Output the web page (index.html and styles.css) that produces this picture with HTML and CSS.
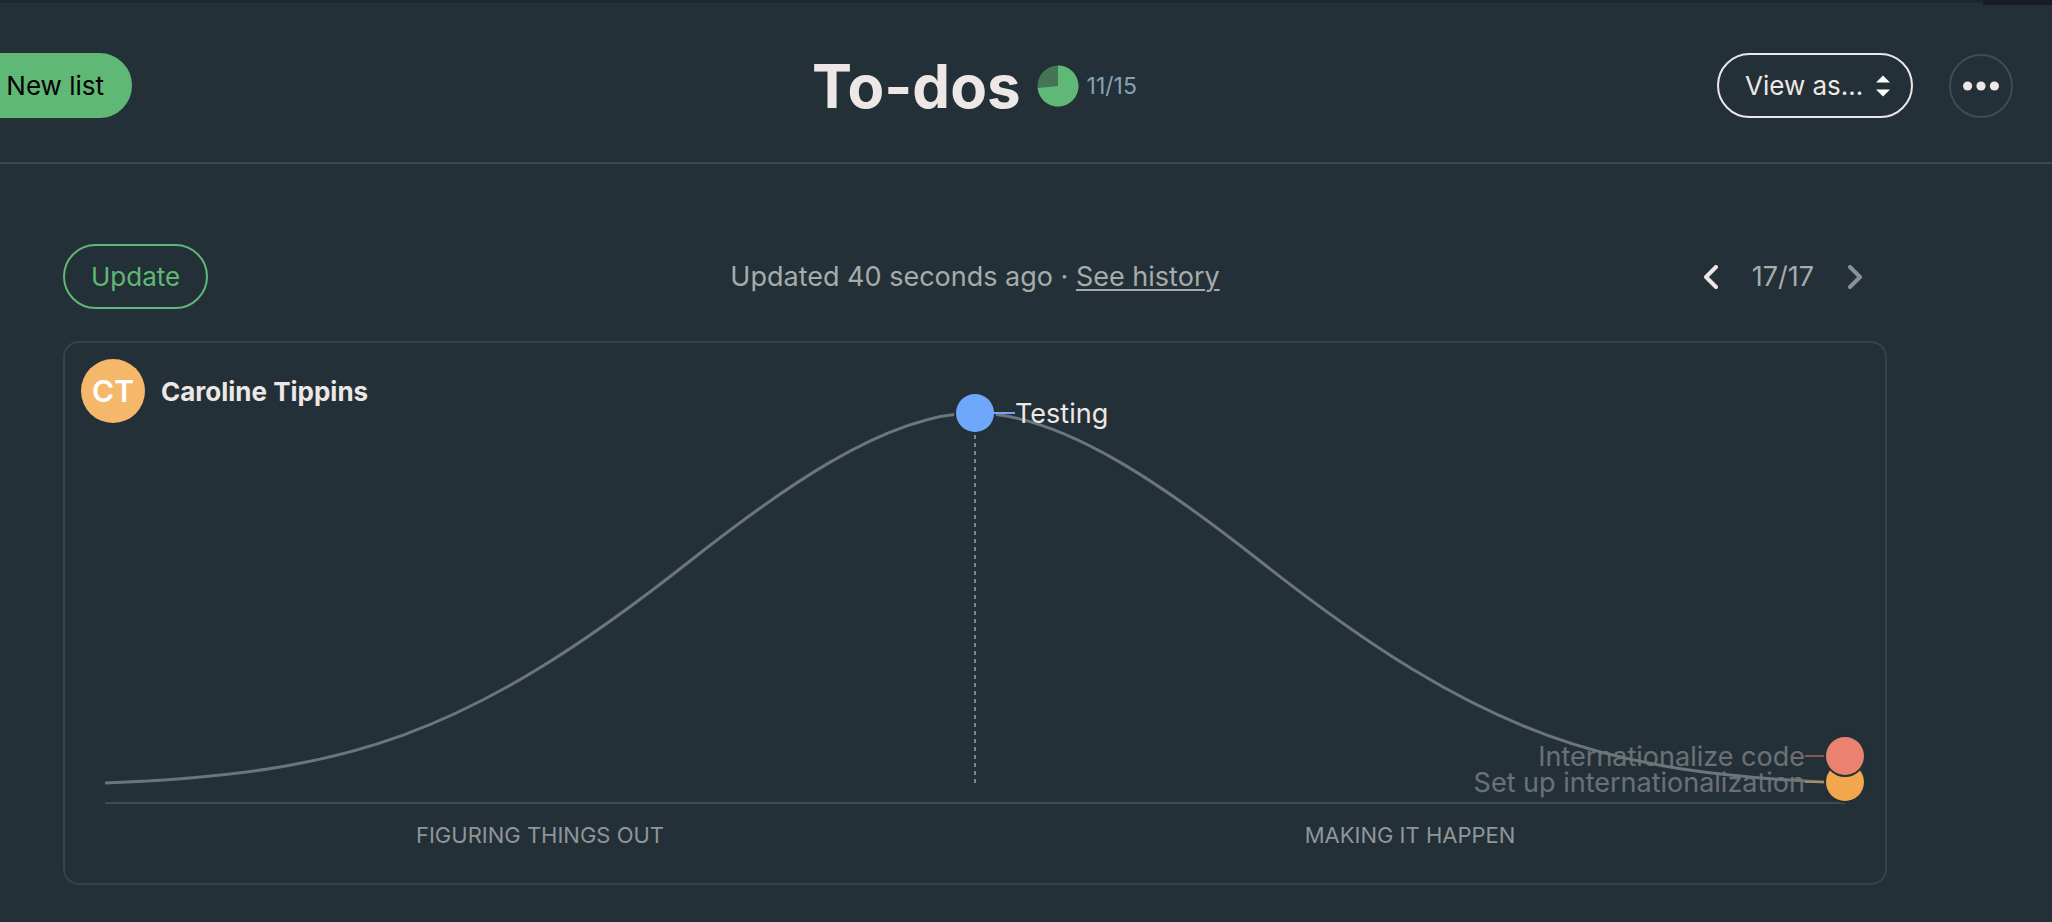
FILE: index.html
```html
<!DOCTYPE html>
<html lang="en">
<head>
<meta charset="utf-8">
<title>To-dos</title>
<link rel="stylesheet" href="styles.css">
</head>
<body>
<div class="edge"><span class="edge-tab"></span></div>
<header class="header">
  <button class="button button-primary" type="button">New list</button>
  <div class="title">
    <h1>To-dos</h1>
    <svg class="pie" viewBox="0 0 42 42" aria-hidden="true">
      <circle cx="21" cy="21" r="20.5" fill="#437556"/>
      <path d="M21 21V.5A20.5 20.5 0 1 1 .6 23.1Z" fill="#5fb876"/>
    </svg>
    <span class="count">11/15</span>
  </div>
  <div class="actions">
    <div class="view">
      <select class="button view-select" aria-label="View as">
        <option>View as...</option>
      </select>
      <svg class="view-arrows" viewBox="0 0 14 22" aria-hidden="true">
        <path d="M0 7.500L7 .5L14 7.500ZM0 14.500H14L7 21.500Z" fill="#fff"/>
      </svg>
    </div>
    <button class="more" type="button" aria-label="More options">
      <svg viewBox="0 0 36 10" aria-hidden="true"><g fill="#ede8e5"><circle cx="4.600" cy="5" r="4.600"/><circle cx="18" cy="5" r="4.600"/><circle cx="31.400" cy="5" r="4.600"/></g></svg>
    </button>
  </div>
</header>
<main class="content">
  <div class="toolbar">
    <button class="button button-outline" type="button">Update</button>
    <p class="status">Updated 40 seconds ago · <a href="#history">See history</a></p>
    <nav class="pager" aria-label="History">
      <button type="button" aria-label="Previous"><svg viewBox="0 0 14 24" aria-hidden="true"><path d="M12 2L2 12L12 22" stroke="#ede8e5"/></svg></button>
      <span class="page">17/17</span>
      <button type="button" aria-label="Next"><svg viewBox="0 0 14 24" aria-hidden="true"><path d="M2 2L12 12L2 22" stroke="#8b9295"/></svg></button>
    </nav>
  </div>
  <section class="card">
    <div class="author"><span class="avatar">CT</span><strong>Caroline Tippins</strong></div>
    <svg class="hill" viewBox="65 343 1820 540" role="img" aria-label="Hill chart">
      <line class="axis" x1="105" y1="803" x2="1845" y2="803"/>
      <line class="middle" x1="975" y1="435" x2="975" y2="783"/>
      <g class="faded">
        <text class="label" x="1805" y="792" text-anchor="end">Set up internationalization</text>
        <text class="label" x="1805" y="766" text-anchor="end">Internationalize code</text>
      </g>
      <path class="curve" d="M105 783C345 773.400 465 738.700 690 561C775 494 885 413 975 413C1065 413 1175 494 1260 561C1485 738.700 1605 773.400 1845 783"/>
      <line class="lead faded-lead" x1="1805" y1="782" x2="1827" y2="782" stroke="#f2a64e"/>
      <line class="lead faded-lead" x1="1805" y1="756" x2="1827" y2="756" stroke="#eb8270"/>
      <circle class="halo" cx="1845" cy="782" r="21"/><circle cx="1845" cy="782" r="19" fill="#f2a64e"/>
      <circle class="halo" cx="1845" cy="756" r="21"/><circle cx="1845" cy="756" r="19" fill="#eb8270"/>
      <circle class="halo" cx="975" cy="413" r="21"/><circle cx="975" cy="413" r="19" fill="#6fa8fa"/>
      <line class="lead" x1="993" y1="413" x2="1015" y2="413" stroke="#6fa8fa"/>
      <text class="label" x="1015" y="423">Testing</text>
      <text class="phase" x="540" y="843" text-anchor="middle">FIGURING THINGS OUT</text>
      <text class="phase" x="1410" y="843" text-anchor="middle">MAKING IT HAPPEN</text>
    </svg>
  </section>
</main>
</body>
</html>
```
FILE: styles.css
```css
* {
  box-sizing: border-box;
}

body {
  margin: 0;
  overflow-x: hidden;
  background: #243037;
  color: #ede8e5;
  font-family: Inter, "Liberation Sans", sans-serif;
  font-size: 26px;
}

button,
select {
  margin: 0;
  font: inherit;
  cursor: pointer;
}

.edge {
  display: flex;
  justify-content: flex-end;
  height: 3px;
  background: #1e272d;
}

.edge-tab {
  width: 69px;
  height: 5px;
  background: #171d26;
}

/* The header starts beyond the left edge of the window. */
.header {
  display: grid;
  grid-template-columns: 1fr auto 1fr;
  align-items: center;
  height: 161px;
  margin-left: -64px;
  padding: 6px 39px 0 0;
  border-bottom: 2px solid #374850;
}

.header > .button {
  justify-self: start;
}

.button {
  height: 65px;
  padding: 0 28px;
  border: 2px solid;
  border-radius: 33px;
  background: transparent;
}

.button-primary {
  width: 196px;
  padding: 0 26px;
  border-color: #5fb876;
  background: #5fb876;
  color: #000;
  text-align: right;
}

.button-outline {
  justify-self: start;
  padding: 0 26px;
  border-color: #5fb876;
  color: #5fb876;
}

.title {
  display: flex;
  align-items: center;
}

.title h1 {
  margin: 0;
  font-size: 60px;
  font-weight: 700;
  line-height: 72px;
}

.pie {
  width: 42px;
  height: 42px;
  margin-left: 16px;
}

.count {
  margin-left: 8px;
  color: #84a2b3;
  font-size: 23px;
}

.actions {
  display: flex;
  justify-content: flex-end;
  align-items: center;
  gap: 36px;
}

.view {
  position: relative;
}

.view-select {
  width: 196px;
  padding: 0 26px;
  appearance: none;
  color: #ede8e5;
}

.view-arrows {
  position: absolute;
  top: 22px;
  right: 23px;
  width: 14px;
  height: 22px;
  pointer-events: none;
}

.more {
  display: grid;
  place-items: center;
  width: 64px;
  height: 64px;
  padding: 0;
  border: 2px solid #404c54;
  border-radius: 50%;
  background: transparent;
}

.more svg {
  width: 36px;
  height: 10px;
}

.content {
  margin: 80px 165px 37px 63px;
}

.toolbar {
  display: grid;
  grid-template-columns: 1fr auto 1fr;
  align-items: center;
  margin-bottom: 32px;
}

.status {
  margin: 0;
  color: #a6abac;
  font-size: 27px;
}

.status a {
  color: inherit;
  text-decoration-thickness: 2px;
  text-underline-offset: 3px;
}

.pager {
  display: flex;
  justify-content: flex-end;
  align-items: center;
  color: #a6abac;
  font-size: 27px;
}

.pager button {
  display: grid;
  place-items: center;
  width: 64px;
  height: 64px;
  padding: 0;
  border: 0;
  background: transparent;
}

.pager svg {
  width: 14px;
  height: 24px;
  fill: none;
  stroke-width: 4;
  stroke-linecap: round;
  stroke-linejoin: round;
}

.page {
  width: 80px;
  text-align: center;
}

.card {
  position: relative;
  border: 2px solid #37434a;
  border-radius: 16px;
}

.author {
  position: absolute;
  top: 16px;
  left: 16px;
  display: flex;
  align-items: center;
  gap: 16px;
}

.avatar {
  display: grid;
  place-items: center;
  width: 64px;
  height: 64px;
  border-radius: 50%;
  background: #f5b86b;
  color: #fff;
  font-size: 30px;
  font-weight: 600;
}

.hill {
  display: block;
  width: 100%;
}

.axis {
  stroke: #404c54;
  stroke-width: 2;
}

.middle {
  stroke: #7b8487;
  stroke-width: 2;
  stroke-dasharray: 4;
}

.curve {
  fill: none;
  stroke: #6c767a;
  stroke-width: 3;
}

.label {
  fill: #ede8e5;
  font-size: 27px;
}

.faded {
  opacity: 0.35;
}

.lead {
  stroke-width: 2;
}

.faded-lead {
  opacity: 0.5;
}

.halo {
  fill: #243037;
}

.phase {
  fill: #8f9598;
  font-size: 22px;
}
```
